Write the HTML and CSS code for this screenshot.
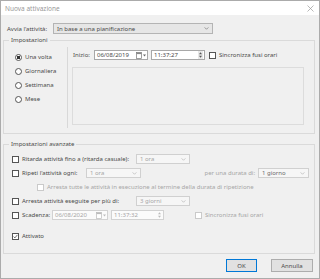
FILE: index.html
```html
<!DOCTYPE html>
<html lang="it">
<head>
    <meta charset="UTF-8">
    <title>Nuova attivazione</title>
    <link rel="stylesheet" href="styles.css">
</head>
<body>
    <div class="window">
        <div class="titlebar">
            <span>Nuova attivazione</span>
            <svg class="close" width="7" height="7" viewBox="0 0 7 7"><path d="M0.5 0.5L6.5 6.5M6.5 0.5L0.5 6.5" stroke="#9a9a9a" stroke-width="0.7"/></svg>
        </div>

        <div class="main">
            <!-- Avvia -->
            <div class="launch">
                <span class="lbl">Avvia l'attività:</span>
                <div class="combo wide">
                    <span>In base a una pianificazione</span>
                    <svg width="5" height="3" viewBox="0 0 6 4"><polyline points="0.5,0.5 3,3 5.5,0.5" fill="none" stroke="#666" stroke-width="0.8"/></svg>
                </div>
            </div>

            <!-- Impostazioni -->
            <div class="group sched">
                <span class="group-title">Impostazioni</span>
                <div class="sched-body">
                    <div class="freq">
                        <div class="radio-row"><span class="radio on"></span>Una volta</div>
                        <div class="radio-row"><span class="radio"></span>Giornaliera</div>
                        <div class="radio-row"><span class="radio"></span>Settimana</div>
                        <div class="radio-row"><span class="radio"></span>Mese</div>
                    </div>
                    <div class="start-area">
                        <div class="start-row">
                            <span class="lbl-start">Inizio:</span>
                            <div class="field date">
                                <span>06/08/2019</span>
                                <svg width="10" height="7" viewBox="0 0 10 7"><rect x="0.5" y="0.5" width="5" height="6" fill="#fff" stroke="#777" stroke-width="0.7"/><rect x="0.5" y="0.5" width="5" height="1.6" fill="#888"/><path d="M7 2.5h3l-1.5 2z" fill="#666"/></svg>
                            </div>
                            <div class="field time">
                                <span>11:37:27</span>
                                <svg width="5" height="8" viewBox="0 0 5 8"><rect x="0" y="0" width="5" height="8" fill="#e8e8e8"/><path d="M1 3.2h3l-1.5-2z M1 4.8h3l-1.5 2z" fill="#555"/></svg>
                            </div>
                            <span class="check"></span>
                            <span class="check-text">Sincronizza fusi orari</span>
                        </div>
                        <div class="detail-box"></div>
                    </div>
                </div>
            </div>

            <!-- Impostazioni avanzate -->
            <div class="group adv">
                <span class="group-title">Impostazioni avanzate</span>
                <div class="adv-body">
                    <div class="adv-row">
                        <span class="check"></span>
                        <span class="lbl-long">Ritarda attività fino a (ritarda casuale):</span>
                        <div class="combo off small">
                            <span>1 ora</span>
                            <svg width="5" height="3" viewBox="0 0 6 4"><polyline points="0.5,0.5 3,3 5.5,0.5" fill="none" stroke="#aaa" stroke-width="0.8"/></svg>
                        </div>
                    </div>
                    <div class="adv-row">
                        <span class="check"></span>
                        <span class="lbl-repeat">Ripeti l'attività ogni:</span>
                        <div class="combo off repeat">
                            <span>1 ora</span>
                            <svg width="5" height="3" viewBox="0 0 6 4"><polyline points="0.5,0.5 3,3 5.5,0.5" fill="none" stroke="#aaa" stroke-width="0.8"/></svg>
                        </div>
                        <span class="dur">per una durata di:</span>
                        <div class="combo off day">
                            <span>1 giorno</span>
                            <svg width="5" height="3" viewBox="0 0 6 4"><polyline points="0.5,0.5 3,3 5.5,0.5" fill="none" stroke="#aaa" stroke-width="0.8"/></svg>
                        </div>
                    </div>
                    <div class="adv-row sub">
                        <span class="check off"></span>
                        <span class="muted">Arresta tutte le attività in esecuzione al termine della durata di ripetizione</span>
                    </div>
                    <div class="adv-row">
                        <span class="check"></span>
                        <span class="lbl-long">Arresta attività eseguite per più di:</span>
                        <div class="combo off small">
                            <span>3 giorni</span>
                            <svg width="5" height="3" viewBox="0 0 6 4"><polyline points="0.5,0.5 3,3 5.5,0.5" fill="none" stroke="#aaa" stroke-width="0.8"/></svg>
                        </div>
                    </div>
                    <div class="adv-row">
                        <span class="check"></span>
                        <span class="lbl-exp">Scadenza:</span>
                        <div class="field off exp-date">
                            <span>06/08/2020</span>
                            <svg width="10" height="7" viewBox="0 0 10 7"><rect x="0.5" y="0.5" width="5" height="6" fill="#fff" stroke="#bbb" stroke-width="0.7"/><rect x="0.5" y="0.5" width="5" height="1.6" fill="#bbb"/><path d="M7 2.5h3l-1.5 2z" fill="#bbb"/></svg>
                        </div>
                        <div class="field off exp-time">
                            <span>11:37:32</span>
                            <svg width="5" height="8" viewBox="0 0 5 8"><path d="M1 3.2h3l-1.5-2z M1 4.8h3l-1.5 2z" fill="#bbb"/></svg>
                        </div>
                        <span class="check off exp-sync"></span>
                        <span class="muted check-text">Sincronizza fusi orari</span>
                    </div>
                    <div class="adv-row enabled">
                        <span class="check on">
                            <svg width="5" height="5" viewBox="0 0 5 5"><polyline points="0.6,2.6 1.9,3.9 4.4,0.9" fill="none" stroke="#333" stroke-width="0.7"/></svg>
                        </span>
                        <span>Attivato</span>
                    </div>
                </div>
            </div>

            <div class="actions">
                <button class="btn ok">OK</button>
                <button class="btn cancel">Annulla</button>
            </div>
        </div>
    </div>
</body>
</html>
```

FILE: styles.css
```css
body {
    margin: 0;
    font-family: 'Noto Sans', 'Liberation Sans', sans-serif;
    font-size: 6px;
    color: #4a4a4a;
}

.window {
    width: 320px;
    height: 279px;
    box-sizing: border-box;
    border: 1px solid #ababab;
    background-color: #f0f0f0;
    overflow: hidden;
}

.titlebar {
    height: 14px;
    background-color: #fff;
    display: flex;
    align-items: center;
    justify-content: space-between;
    padding: 0 5px 0 4px;
    color: #999;
    font-size: 6.5px;
}

.main {
    padding: 0 4px 0 2px;
}

.launch {
    display: flex;
    align-items: center;
    margin-top: 8px;
    height: 11px;
    padding-left: 4px;
}

.launch .lbl {
    width: 46px;
}

.combo {
    box-sizing: border-box;
    height: 11px;
    border: 1px solid #b4b4b4;
    background-color: #e6e6e6;
    display: flex;
    align-items: center;
    justify-content: space-between;
    padding: 0 3px;
}

.combo.wide {
    width: 160px;
}

.combo.off {
    height: 10px;
    border-color: #d0d0d0;
    background-color: #f6f6f6;
    color: #a6a6a6;
}

.combo.small {
    width: 54px;
}

.combo.repeat {
    width: 55px;
}

.combo.day {
    width: 51px;
    color: #6a6a6a;
}

.field {
    box-sizing: border-box;
    height: 10px;
    border: 1px solid #a8a8a8;
    background-color: #fff;
    display: flex;
    align-items: center;
    justify-content: space-between;
    padding: 0 1px 0 2px;
}

.field.off {
    border-color: #d2d2d2;
    background-color: #fbfbfb;
    color: #a6a6a6;
}

.check {
    box-sizing: border-box;
    width: 7px;
    height: 7px;
    border: 1px solid #555;
    background-color: #fff;
    display: flex;
    align-items: center;
    justify-content: center;
    flex-shrink: 0;
}

.check.off {
    border-color: #cacaca;
}

.check-text {
    margin-left: 3px;
}

.muted {
    color: #a6a6a6;
}

/* group boxes */
.group {
    border: 1px solid #dadada;
}

.group-title {
    display: block;
    width: max-content;
    margin: -5px 0 0 5px;
    padding: 0 2px;
    height: 8px;
    line-height: 8px;
    background-color: #f0f0f0;
}

.group.sched {
    margin-top: 6px;
    padding-bottom: 5px;
}

.sched-body {
    display: flex;
    margin-top: 3px;
    height: 81px;
}

.freq {
    box-sizing: border-box;
    width: 64px;
    border-right: 1px solid #d8d8d8;
    padding: 3px 0 0 11px;
}

.radio-row {
    display: flex;
    align-items: center;
    height: 14px;
}

.radio {
    box-sizing: border-box;
    width: 7px;
    height: 7px;
    border: 1px solid #555;
    border-radius: 50%;
    background-color: #fff;
    margin-right: 3px;
}

.radio.on {
    background: radial-gradient(circle, #333 0 1.5px, #fff 2px);
}

.start-area {
    flex: 1;
    padding: 3px 0 0 4px;
}

.start-row {
    display: flex;
    align-items: center;
    height: 10px;
}

.lbl-start {
    width: 21px;
    margin-left: 1px;
}

.date {
    width: 54px;
    margin-right: 3px;
}

.time {
    width: 54px;
    margin-right: 4px;
}

.detail-box {
    box-sizing: border-box;
    margin-top: 7px;
    width: 232px;
    height: 58px;
    border: 1px solid #dcdcdc;
}

.group.adv {
    margin-top: 10px;
    padding-bottom: 10px;
}

.adv-body {
    padding: 4px 5px 0 8px;
}

.adv-row {
    display: flex;
    align-items: center;
    height: 14px;
}

.adv-row > .check {
    margin-right: 3px;
}

.adv-row.sub {
    padding-left: 25px;
}

.adv-row.enabled {
    margin-top: 7px;
}

.lbl-long {
    width: 114px;
}

.lbl-repeat {
    width: 64px;
}

.dur {
    margin-left: auto;
    margin-right: 3px;
    color: #a6a6a6;
}

.lbl-exp {
    width: 30px;
}

.exp-date {
    width: 56px;
    margin-right: 3px;
}

.exp-time {
    width: 53px;
}

.adv-row > .exp-sync {
    margin-left: 31px;
    margin-right: 0;
}

.actions {
    display: flex;
    justify-content: flex-end;
    gap: 14px;
    margin-top: 5px;
    padding-right: 2px;
}

.btn {
    box-sizing: border-box;
    height: 13px;
    padding: 0;
    border: 1px solid #adadad;
    background-color: #e1e1e1;
    font-family: inherit;
    font-size: 6px;
    color: #4a4a4a;
}

.btn.ok {
    width: 31px;
    border-color: #0078d7;
}

.btn.cancel {
    width: 42px;
}
```
